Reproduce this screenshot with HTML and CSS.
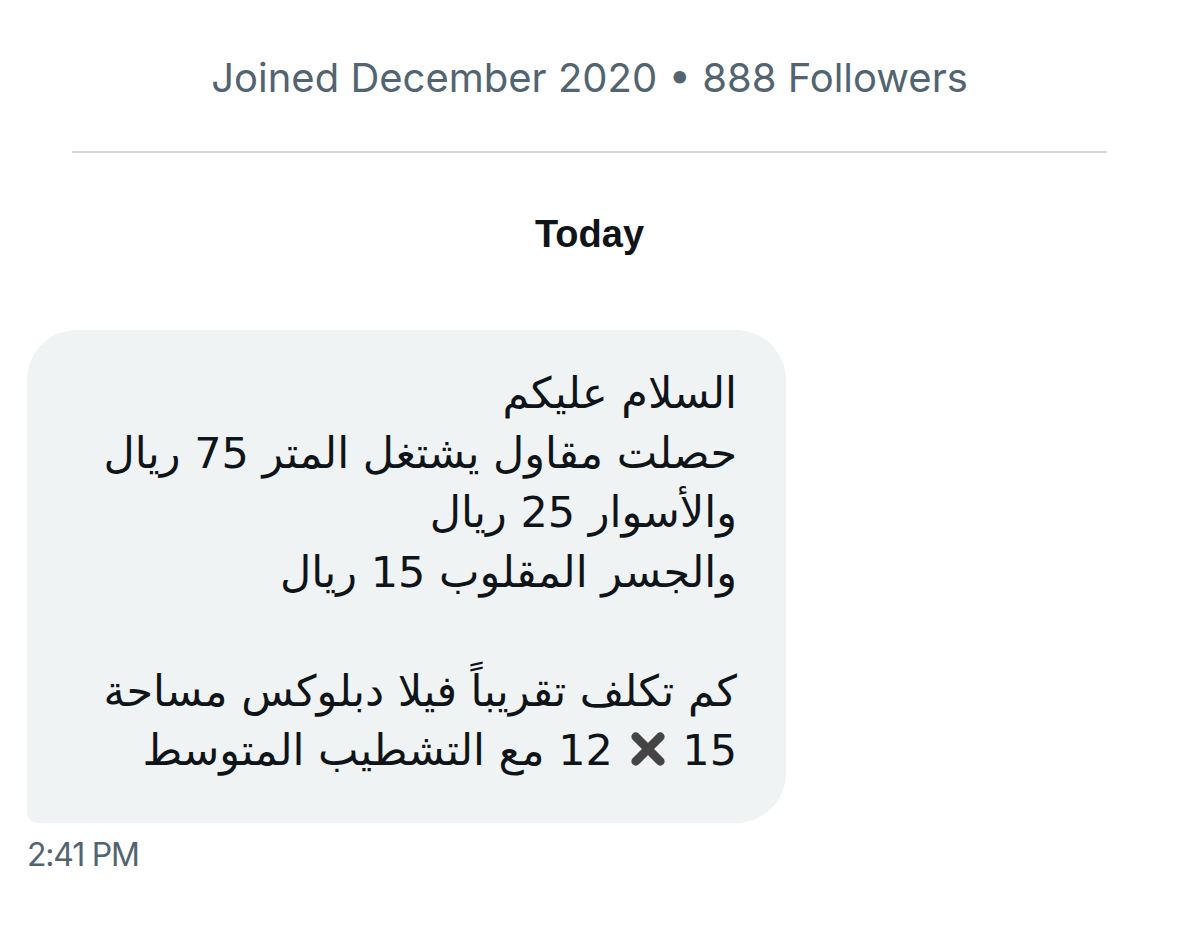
FILE: index.html
```html
<!DOCTYPE html>
<html lang="en">
<head>
  <meta charset="UTF-8" />
  <meta name="viewport" content="width=device-width, initial-scale=1" />
  <title>Messages</title>
  <link rel="stylesheet" href="styles.css">
</head>
<body>

<div class="profile-meta">Joined December 2020 • 888 Followers</div>
<hr class="divider" />

<div class="day">Today</div>

<div class="thread">
  <div class="bubble" dir="rtl" lang="ar">
    <p>السلام عليكم<br>حصلت مقاول يشتغل المتر 75 ريال<br>والأسوار 25 ريال<br>والجسر المقلوب 15 ريال</p>
    <p>كم تكلف تقريباً فيلا دبلوكس مساحة<br>15 <svg class="times" viewBox="0 0 24 24" aria-hidden="true"><path d="M5 5 L19 19 M19 5 L5 19" /></svg> 12 مع التشطيب المتوسط</p>
  </div>
  <div class="time">2:41 PM</div>
</div>

</body>
</html>
```

FILE: styles.css
```css
body {
  margin: 0;
  background-color: #fff;
  color: #0f1419;
  font-family: "Liberation Sans", "DejaVu Sans", Arial, sans-serif;
}
.profile-meta {
  padding-top: 54px;
  text-align: center;
  font-family: Inter, "Liberation Sans", sans-serif;
  font-size: 40px;
  line-height: 48px;
  color: #536471;
}
.divider {
  margin: 49px 72px 0 72px;
  border: none;
  border-top: 2px solid #d2d8dc;
}
.day {
  margin-top: 59px;
  text-align: center;
  font-family: "Liberation Sans", Arial, sans-serif;
  font-weight: bold;
  font-size: 38px;
  line-height: 44px;
}
.thread {
  margin-top: 74px;
  padding-left: 27px;
}
.bubble {
  width: 759px;
  box-sizing: border-box;
  background-color: #eff3f4;
  border-radius: 50px 50px 50px 10px;
  padding: 34px 49px 42px 30px;
  font-family: "DejaVu Sans", "Noto Sans", sans-serif;
  font-size: 43px;
  line-height: 59.5px;
}
.bubble p {
  margin: 0 0 59.5px 0;
}
.bubble p:last-child {
  margin-bottom: 0;
}
.times {
  width: 42px;
  height: 42px;
  vertical-align: -5px;
}
.times path {
  stroke: #444;
  stroke-width: 5;
  stroke-linecap: round;
  fill: none;
}
.time {
  margin-top: 12px;
  font-family: Inter, "Liberation Sans", sans-serif;
  font-size: 32px;
  letter-spacing: -1.2px;
  color: #536471;
}
```
